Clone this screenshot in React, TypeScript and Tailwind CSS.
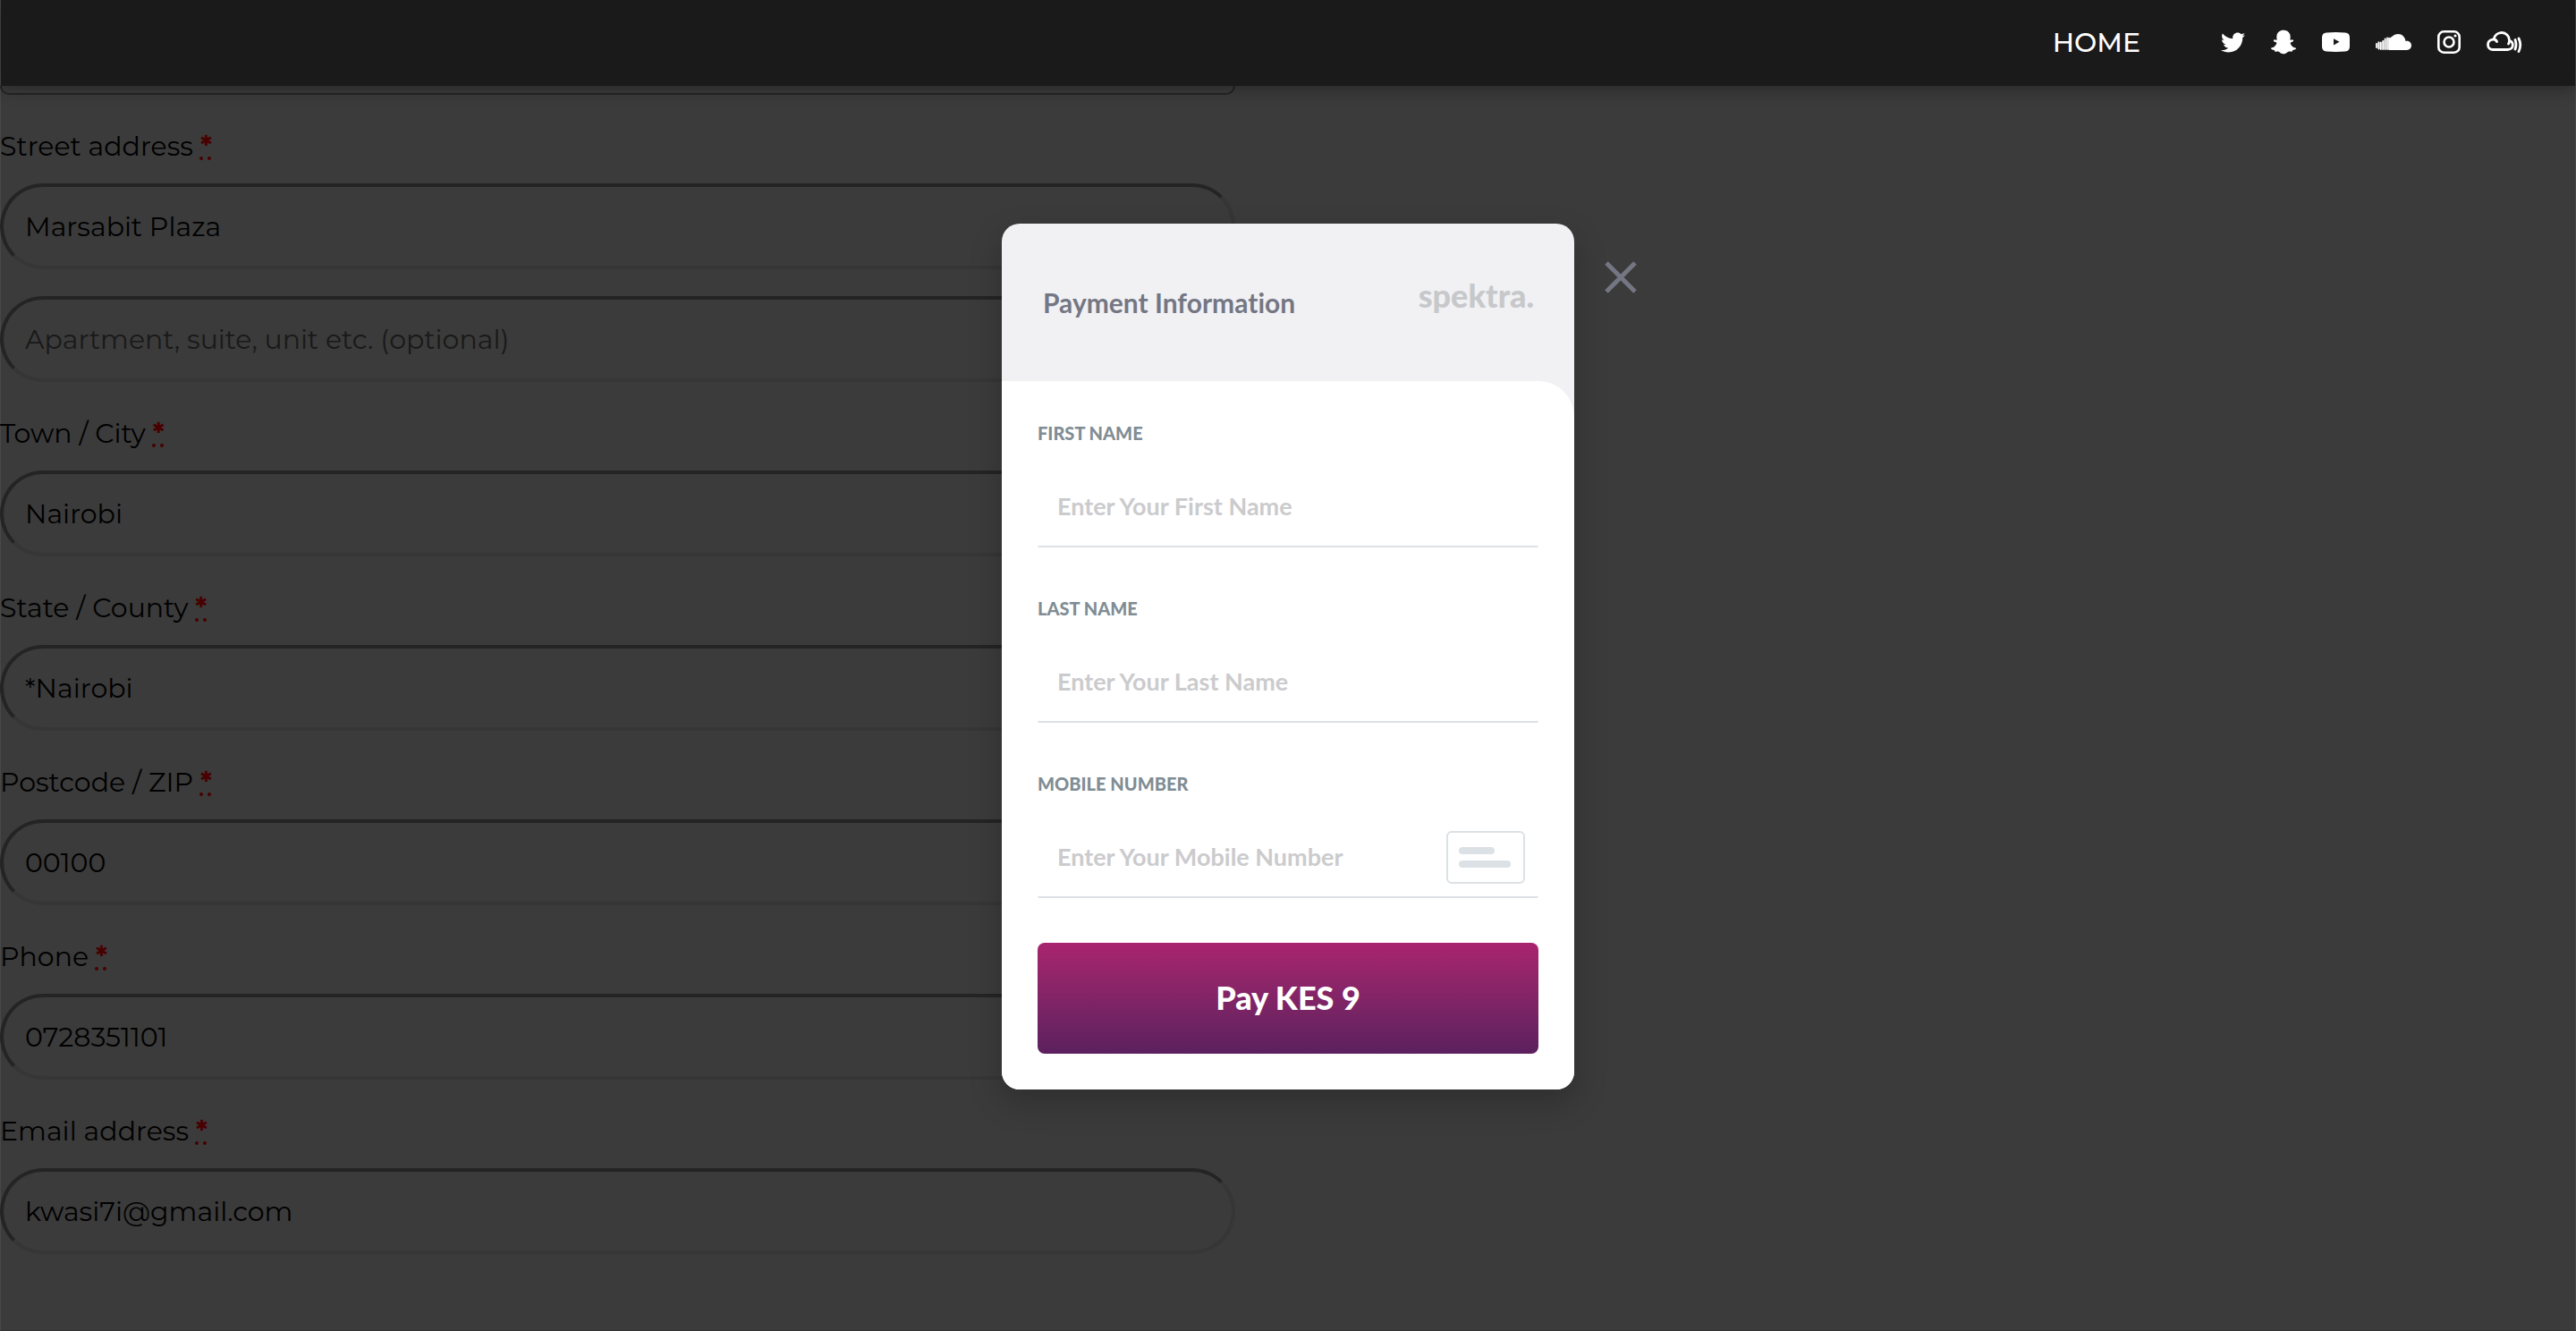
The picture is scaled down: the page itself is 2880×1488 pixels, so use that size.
import { FaTwitter, FaSnapchatGhost } from "react-icons/fa";

const fields = [
  { id: "city", label: "Town / City", value: "Nairobi" },
  { id: "state", label: "State / County", value: "*Nairobi" },
  { id: "postcode", label: "Postcode / ZIP", value: "00100" },
  { id: "phone", label: "Phone", value: "0728351101" },
  { id: "email", label: "Email address", value: "kwasi7i@gmail.com" },
];

const inputClass =
  "block h-24 w-full rounded-[48px] border-4 border-t-[#242424] border-l-[#242424] border-r-[#363636] border-b-[#363636] bg-transparent px-6 text-[30px] text-black outline-none placeholder:text-[#191919] placeholder:opacity-100";

function FieldLabel({ htmlFor, children }: { htmlFor: string; children: string }) {
  return (
    <label htmlFor={htmlFor} className="block h-[69px] text-[30px] leading-14">
      {children}{" "}
      <abbr
        title="required"
        className="font-bold text-[#480000] underline decoration-dotted decoration-4 underline-offset-1"
      >
        *
      </abbr>
    </label>
  );
}

function BillingForm() {
  return (
    <form className="-ml-px flex w-[48%] flex-col gap-[30px] pb-[85px]">
      <div className="h-2.5 rounded-b-[10px] border-2 border-t-0 border-[#242424]" />
      <div>
        <FieldLabel htmlFor="street">Street address</FieldLabel>
        <input id="street" className={inputClass} defaultValue="Marsabit Plaza" />
      </div>
      <input
        aria-label="Apartment"
        className={inputClass}
        placeholder="Apartment, suite, unit etc. (optional)"
      />
      {fields.map((f) => (
        <div key={f.id}>
          <FieldLabel htmlFor={f.id}>{f.label}</FieldLabel>
          <input id={f.id} className={inputClass} defaultValue={f.value} />
        </div>
      ))}
    </form>
  );
}

function YoutubeIcon() {
  return (
    <svg viewBox="0 0 31 22" className="h-[22px] w-[31px]" fill="currentColor">
      <path
        fillRule="evenodd"
        d="M5 .5Q15.500-.3 26 .5Q31 .8 31 6V16Q31 21.200 26 21.500Q15.500 22.300 5 21.500Q0 21.200 0 16V6Q0 .8 5 .5ZM13 7.200V14.400L19.500 10.800Z"
      />
    </svg>
  );
}

function SoundcloudIcon() {
  return (
    <svg viewBox="0 0 40 18" className="h-[18px] w-10" fill="currentColor">
      <path d="M18 3Q21 0 25 0C29.500 0 33 3.500 33.500 8C37 7 40 9.500 40 12.800C40 15.800 37.800 18 35 18H15V5.200Z" />
      <path
        stroke="currentColor"
        strokeWidth="1.800"
        strokeLinecap="round"
        d="M1 11V15M3.400 9.200V16.600M5.800 9.500V17M8.200 8V17M10.600 5.500V17M13 4.500V17M15 4.700V17"
      />
      <path stroke="currentColor" strokeOpacity=".55" d="M2.200 10V16M4.600 9.500V17M7 9V17.500M9.400 7V17.500M11.800 5.500V17.500" />
    </svg>
  );
}

function InstagramIcon() {
  return (
    <svg viewBox="0 0 26 26" className="size-[26px]" fill="none" stroke="currentColor">
      <rect x="1.300" y="1.300" width="23.400" height="23.400" rx="6" strokeWidth="2.600" />
      <circle cx="13" cy="13" r="5.500" strokeWidth="2.600" />
      <circle cx="20" cy="6" r="1.600" fill="currentColor" stroke="none" />
    </svg>
  );
}

function CloudWavesIcon() {
  return (
    <svg
      viewBox="0 0 40 26"
      className="h-[26px] w-10"
      fill="none"
      stroke="currentColor"
      strokeWidth="2.800"
      strokeLinecap="round"
      strokeLinejoin="round"
    >
      <path d="M11.500 12.500C10.500 10.500 8.500 9.700 6.800 10.200C3.500 10.800 1.500 13.300 1.500 16C1.500 19.200 4 21.500 7 21.500H23.500C27 21.500 29.300 19.300 29.300 16.500C29.300 13.800 27.800 12 25.500 11.200C25.600 6 21.500 2.500 17 2.500C12.500 2.500 9 5.500 8 9.800M25.500 11.200Q25.500 13.500 24.500 15" />
      <path d="M32 10.500Q34 16 32 21M36 9Q39.500 16 36 23.500" />
    </svg>
  );
}

function Header() {
  return (
    <header className="relative z-10 flex h-24 items-center justify-end bg-[#1a1a1a] pr-[59px] pb-0.5 text-white shadow-[0_4px_16px_rgba(0,0,0,0.3)]">
      <a href="#home" className="mr-[90px] text-[30px] font-medium">
        HOME
      </a>
      <nav aria-label="Social" className="flex items-center gap-[29px]">
        <a href="#twitter" aria-label="Twitter"><FaTwitter className="size-[27px]" /></a>
        <a href="#snapchat" aria-label="Snapchat"><FaSnapchatGhost className="size-7" /></a>
        <a href="#youtube" aria-label="YouTube"><YoutubeIcon /></a>
        <a href="#soundcloud" aria-label="SoundCloud"><SoundcloudIcon /></a>
        <a href="#instagram" aria-label="Instagram"><InstagramIcon /></a>
        <a href="#mixes" aria-label="Mixes"><CloudWavesIcon /></a>
      </nav>
    </header>
  );
}

function CardIcon() {
  return (
    <div className="mr-[15px] flex h-[59px] w-[88px] flex-col justify-center gap-[7px] rounded-md border-2 border-[#dce1e5] pl-3">
      <span className="h-2 w-10 rounded-full bg-[#dce1e5]" />
      <span className="h-2 w-[58px] rounded-full bg-[#dce1e5]" />
    </div>
  );
}

function PaymentField({ id, label, placeholder, icon }: { id: string; label: string; placeholder: string; icon?: boolean }) {
  return (
    <div>
      <label htmlFor={id} className="block text-[20px] leading-6 font-black text-[#808d94] uppercase">
        {label}
      </label>
      <div className="mt-5 flex h-24 items-center rounded-xs border-b-2 border-[#dce1e5] pt-1.5">
        <input
          id={id}
          className="h-full min-w-0 flex-1 px-[22px] pb-0.5 text-[27px] font-bold text-[#747783] outline-none placeholder:text-[#cbcbcd] placeholder:opacity-100"
          placeholder={placeholder}
        />
        {icon && <CardIcon />}
      </div>
    </div>
  );
}

function PaymentDialog() {
  return (
    <div className="absolute inset-0 z-20 flex items-start justify-center pt-[250px] font-[Lato,sans-serif] [font-variant-ligatures:none]">
      <div className="relative">
        <section
          role="dialog"
          aria-label="Payment Information"
          className="w-[640px] overflow-hidden rounded-[20px] bg-[#f1f1f4] shadow-[0_14px_36px_rgba(0,0,0,0.22)]"
        >
          <div className="flex h-44 items-center justify-between pr-[45px] pl-[46px]">
            <h1 className="text-[30px] font-bold text-[#747783]">Payment Information</h1>
            <span className="pb-4 text-[36px] leading-10 font-black text-[#c7c8ca]">spektra.</span>
          </div>
          <form className="rounded-tr-[40px] bg-white px-10 pt-[46px] pb-10">
            <div className="flex flex-col gap-14">
              <PaymentField id="first" label="First name" placeholder="Enter Your First Name" />
              <PaymentField id="last" label="Last name" placeholder="Enter Your Last Name" />
              <PaymentField id="mobile" label="Mobile number" placeholder="Enter Your Mobile Number" icon />
            </div>
            <button
              type="button"
              className="mt-[50px] h-[124px] w-full rounded-lg bg-linear-to-b from-[#a9246e] to-[#5c205e] pb-0.5 text-[36px] font-black text-white"
            >
              Pay KES 9
            </button>
          </form>
        </section>
        <button type="button" aria-label="Close" className="absolute top-[42px] left-full ml-[34px] text-[#747783]">
          <svg viewBox="0 0 36 36" className="size-9" stroke="currentColor" strokeWidth="5">
            <path d="M2 2L34 34M34 2L2 34" />
          </svg>
        </button>
      </div>
    </div>
  );
}

export default function App() {
  return (
    <div className="relative min-h-screen border-x border-b border-x-[#484848] border-b-[#333] bg-[#3b3b3b] font-[Montserrat,Inter,sans-serif] text-black">
      <Header />
      <BillingForm />
      <PaymentDialog />
    </div>
  );
}
